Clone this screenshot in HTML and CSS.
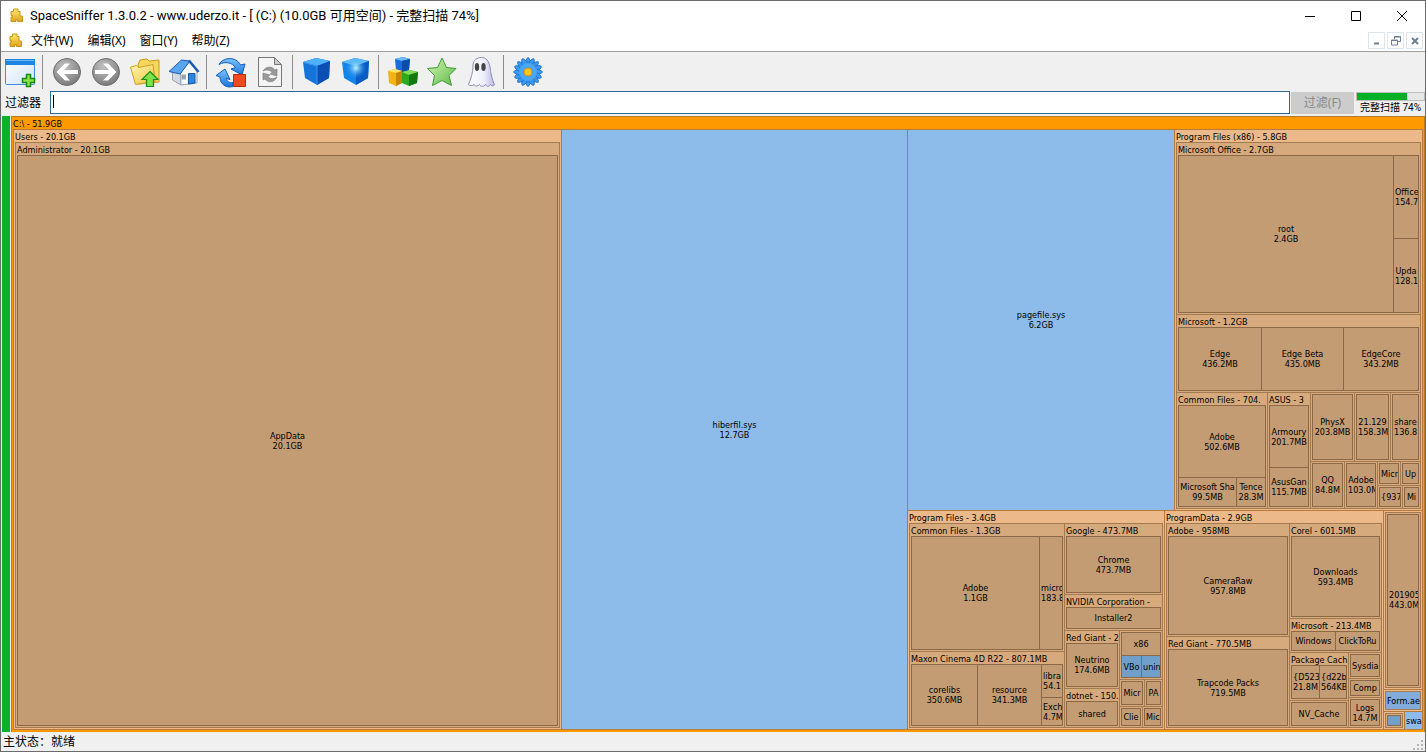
FILE: index.html
```html
<!DOCTYPE html>
<html lang="zh-CN">
<head>
<meta charset="utf-8">
<title>SpaceSniffer 1.3.0.2</title>
<link rel="stylesheet" href="styles.css">
</head>
<body>
<svg class="defs" aria-hidden="true">
  <defs>
    <linearGradient id="gold" x1="0" y1="0" x2="0" y2="1"><stop offset="0" stop-color="#ffe873"/><stop offset="1" stop-color="#dfa516"/></linearGradient>
    <linearGradient id="pane" x1="0" y1="0" x2="1" y2="1"><stop offset="0" stop-color="#ffffff"/><stop offset="1" stop-color="#cfe3fb"/></linearGradient>
    <radialGradient id="steel" cx=".4" cy=".3" r=".7"><stop offset="0" stop-color="#c2c2c2"/><stop offset="1" stop-color="#7c7c7c"/></radialGradient>
    <linearGradient id="arrow" x1="0" y1="0" x2="0" y2="1"><stop offset="0" stop-color="#7cc4ff"/><stop offset="1" stop-color="#1c74dc"/></linearGradient>
    <linearGradient id="folder" x1="0" y1="0" x2="1" y2="1"><stop offset="0" stop-color="#fff7b4"/><stop offset="1" stop-color="#edc13a"/></linearGradient>
    <radialGradient id="glow"><stop offset="0" stop-color="#c4f6ff"/><stop offset="1" stop-color="#2aa2f4" stop-opacity="0"/></radialGradient>
    <linearGradient id="leaf" x1="0" y1="0" x2="1" y2="1"><stop offset="0" stop-color="#d4f5b8"/><stop offset="1" stop-color="#5fba45"/></linearGradient>
    <linearGradient id="ghost" x1="0" y1="0" x2="1" y2="0"><stop offset="0" stop-color="#ffffff"/><stop offset=".6" stop-color="#eeeefc"/><stop offset="1" stop-color="#b9b9e4"/></linearGradient>
    <symbol id="puzzle" viewBox="0 0 16 16"><path d="M4.500 1h4.500v2.500h2v4.500h2.500v5.500h-5v-2h-1.500v2h-5v-4.500h1.500v-1.500h-1.500v-4h2.500z" fill="url(#gold)" stroke="#c8961c" stroke-linejoin="round"/></symbol>
  </defs>
</svg>
<div class="window">
  <header class="titlebar">
    <svg class="app-icon"><use href="#puzzle"/></svg>
    <h1 class="title">SpaceSniffer 1.3.0.2 - www.uderzo.it - [ (C:) (10.0GB 可用空间) - 完整扫描 74%]</h1>
    <div class="window-buttons">
      <button aria-label="最小化"><svg viewBox="0 0 10 10"><path d="M0 5.500h10"/></svg></button>
      <button aria-label="最大化"><svg viewBox="0 0 10 10"><path d="M.5.5h9v9h-9z"/></svg></button>
      <button aria-label="关闭"><svg viewBox="0 0 10 10"><path d="M0 0l10 10M10 0L0 10"/></svg></button>
    </div>
  </header>
  <nav class="menubar">
    <svg class="app-icon"><use href="#puzzle"/></svg>
    <button class="menu">文件(W)</button>
    <button class="menu">编辑(X)</button>
    <button class="menu">窗口(Y)</button>
    <button class="menu">帮助(Z)</button>
    <div class="child-buttons">
      <button aria-label="最小化子窗口"><svg viewBox="0 0 10 10"><path d="M2 7.500h5" stroke-width="2"/></svg></button>
      <button aria-label="还原子窗口"><svg viewBox="0 0 10 10"><path d="M3.500 3V.5h6v5H7M3 1h7M.5 4h6v5h-6zM0 4.500h7"/></svg></button>
      <button aria-label="关闭子窗口"><svg viewBox="0 0 10 10"><path d="M2 2l6 6M8 2L2 8" stroke-width="2"/></svg></button>
    </div>
  </nav>
  <div class="toolbar">
    <button class="tool" aria-label="新建视图"><svg viewBox="0 0 32 32">
      <rect x="1.500" y="3.500" width="29" height="25" rx="1" fill="url(#pane)" stroke="#3c8fdc"/><path d="M1 3h30v6H1z" fill="#1c84e2"/><path d="M2 4.500h28" stroke="#6cb9f5"/>
      <path d="M22.500 18.500h4v4h4v4h-4v4h-4v-4h-4v-4h4z" fill="#8be34a" stroke="#168a16" stroke-width="1.500"/></svg></button>
    <span class="separator"></span>
    <button class="tool" aria-label="后退"><svg viewBox="0 0 32 32"><circle cx="16" cy="16" r="13.500" fill="url(#steel)" stroke="#6e6e6e"/><path d="M27 14v4H13l6 6.500h-5L5.500 16 14 7.500h5L13 14z" fill="#fff"/></svg></button>
    <button class="tool" aria-label="前进"><svg viewBox="0 0 32 32"><circle cx="16" cy="16" r="13.500" fill="url(#steel)" stroke="#6e6e6e"/><path d="M5 14v4h14l-6 6.500h5l8.500-8.500L18 7.500h-5l6 6.500z" fill="#fff"/></svg></button>
    <button class="tool" aria-label="上一级"><svg viewBox="0 0 32 32">
      <path d="M9 9l2-5 7-1 2 2 10-1v22l-20 2z" fill="#f5d75c" stroke="#c99a1a"/><path d="M1.500 11l6-1.500 2 2L24 8.500l2 17-19.500 3z" fill="url(#folder)" stroke="#d0a022"/>
      <path d="M21 15.500l8 8h-4.500v7h-7v-7H13z" fill="#7fe04a" stroke="#1b8f1b" stroke-width="1.200"/></svg></button>
    <button class="tool" aria-label="主页"><svg viewBox="0 0 32 32">
      <path d="M4.500 15l8.500 2v12l-8.500-5z" fill="#d3dae2" stroke="#97a3b0"/><path d="M12.500 17L21 6l8 9.500V27l-16 2z" fill="#f6f9fc" stroke="#97a3b0"/>
      <path d="M1 15.500L13.500 4 22 5 12 18z" fill="#5aa6f0" stroke="#1b5cb0"/><path d="M21 4.500L30.500 16" stroke="#1b5cb0" stroke-width="2.500"/>
      <path d="M20.500 17.500h6.500v9.500l-6.500 1z" fill="#2a86e4" stroke="#17559f"/><path d="M13.500 18.500h4.500v5h-4.500z" fill="#9aa6b4"/></svg></button>
    <span class="separator"></span>
    <button class="tool" aria-label="停止扫描"><svg viewBox="0 0 32 32">
      <path d="M4 8.500C8 1 21 0 25.500 9l4.500-1-3 11-11-6 4.500-1.500C17 6.500 10 5 4 8.500z" fill="url(#arrow)" stroke="#145cb4"/>
      <path d="M1 19.500l9-6.500 5 10.500-4-1c1 3 4 5 7 4v4C11 32.500 5 28 5 21z" fill="url(#arrow)" stroke="#145cb4"/>
      <path d="M18.500 18.500h12v12h-12z" fill="#f14a22" stroke="#c02a10"/></svg></button>
    <button class="tool" aria-label="重新扫描"><svg viewBox="0 0 32 32">
      <path d="M4.500 1.500h16l7 7v22h-23z" fill="#f4f4f4" stroke="#777"/><path d="M20.500 1.500v7h7z" fill="#ccc" stroke="#777"/>
      <path d="M9 15c3-5 9-5 12-1l2-1v7l-7-2 2-1.500c-2-3-6-3-9-1.500zM23 21c-3 6-9 6-12 2l-2 1v-7l7 2-2 1.500c2 3 6 2.500 9 .5z" fill="#9a9a9a" stroke="#777" stroke-width=".6"/></svg></button>
    <span class="separator"></span>
    <button class="tool" aria-label="减少细节"><svg viewBox="0 0 32 32">
      <path d="M2 6l13-4 14 3-1 17-12 7L4 22z" fill="#1474da"/><path d="M2 6l13-4 14 3-13 5z" fill="#4fb0fb"/><path d="M16 10l13-5-1 17-12 7z" fill="#0a4fb4"/><path d="M2.500 6.500L16 10v18" fill="none" stroke="#3a98f0"/></svg></button>
    <button class="tool" aria-label="增加细节"><svg viewBox="0 0 32 32">
      <path d="M2 6l13-4 14 3-1 17-12 7L4 22z" fill="#1484e8"/><path d="M2 6l13-4 14 3-13 5z" fill="#5fbcff"/><path d="M16 10l13-5-1 17-12 7z" fill="#0a5cc4"/><circle cx="16" cy="12" r="10" fill="url(#glow)"/></svg></button>
    <span class="separator"></span>
    <button class="tool" aria-label="文件类型"><svg viewBox="0 0 32 32">
      <path d="M8 3l8-2 7 2-1 11-7 3-6-3z" fill="#1a6cd8"/><path d="M8 3l8-2 7 2-8 2z" fill="#6cb8fa"/><path d="M15 5l8-2-1 11-7 3z" fill="#0c4ba8"/>
      <path d="M1 15l7-2 7 2v12l-6 3-7-3z" fill="#f0b414"/><path d="M1 15l7-2 7 2-6 2z" fill="#ffe468"/><path d="M9 17l6-2v12l-6 3z" fill="#c88408"/>
      <path d="M15 16l8-2 8 2-1 11-8 3-7-3z" fill="#2eaa20"/><path d="M15 16l8-2 8 2-9 3z" fill="#84dc5c"/><path d="M22 19l9-3-1 11-8 3z" fill="#127a10"/></svg></button>
    <button class="tool" aria-label="标记"><svg viewBox="0 0 32 32"><path d="M16 2l4.500 9.500L30 12.500l-7 7 2.500 10L16 24.500l-9.500 5 2-10-7-7 10-1z" fill="url(#leaf)" stroke="#3f9c35" stroke-linejoin="round"/></svg></button>
    <button class="tool" aria-label="可用空间"><svg viewBox="0 0 32 32"><path d="M8 10c0-6 4-8.500 8.500-8.500S24 5 25 11c.6 6 2 12 4.500 18-1.500 1.500-3 1-4-.5-1.500 2.500-4 2.500-5 0-1.500 2.500-5 2.500-6 0-2 2-5 2-5.500 0-1.500 1.500-4 1.500-5.500 0C6 23 8 16 8 10z" fill="url(#ghost)" stroke="#8c8cb4"/><ellipse cx="12" cy="11" rx="2.200" ry="4" fill="#444"/><ellipse cx="18.500" cy="11" rx="2.200" ry="4" fill="#444"/></svg></button>
    <span class="separator"></span>
    <button class="tool" aria-label="设置"><svg viewBox="0 0 32 32">
      <g fill="#3a98ee" stroke="#1260b8" stroke-width=".6">
        <ellipse cx="16" cy="16" rx="3.500" ry="14.500"/><ellipse cx="16" cy="16" rx="3.500" ry="14.500" transform="rotate(22.500 16 16)"/><ellipse cx="16" cy="16" rx="3.500" ry="14.500" transform="rotate(45 16 16)"/><ellipse cx="16" cy="16" rx="3.500" ry="14.500" transform="rotate(67.500 16 16)"/>
        <ellipse cx="16" cy="16" rx="3.500" ry="14.500" transform="rotate(90 16 16)"/><ellipse cx="16" cy="16" rx="3.500" ry="14.500" transform="rotate(112.500 16 16)"/><ellipse cx="16" cy="16" rx="3.500" ry="14.500" transform="rotate(135 16 16)"/><ellipse cx="16" cy="16" rx="3.500" ry="14.500" transform="rotate(157.500 16 16)"/>
      </g><circle cx="16" cy="16" r="9" fill="#4aa6f6"/><circle cx="16" cy="16" r="4" fill="#ffc81e" stroke="#d89010"/></svg></button>
  </div>
  <form class="filterbar">
    <label class="filter-label" for="filter">过滤器</label>
    <input class="filter-input" id="filter" type="text">
    <button class="filter-button" type="button" disabled>过滤(F)</button>
    <div class="scan">
      <progress class="scan-bar" id="scan" max="100" value="74"></progress>
      <label class="scan-label" for="scan">完整扫描 74%</label>
    </div>
  </form>

  <main class="content">
    <div class="free-space"></div>
    <section class="folder root">
      <h2 class="cap">C:\ - 51.9GB</h2>
      <div class="body cols" style="--t:547fr 345fr 514fr">
        <section class="folder l1">
          <h3 class="cap">Users - 20.1GB</h3>
          <div class="body cols">
            <section class="folder l2">
              <h4 class="cap">Administrator - 20.1GB</h4>
              <div class="body cols"><div class="leaf"><p>AppData<br>20.1GB</p></div></div>
            </section>
          </div>
        </section>
        <div class="leaf file0"><p>hiberfil.sys<br>12.7GB</p></div>
        <div class="rows" style="--t:380fr 218fr">
          <div class="cols" style="--t:266fr 247fr">
            <div class="leaf file0"><p>pagefile.sys<br>6.2GB</p></div>
            <section class="folder l1">
              <h3 class="cap">Program Files (x86) - 5.8GB</h3>
              <div class="body rows" style="--t:171fr 77fr 115fr">
                <section class="folder l2">
                  <h4 class="cap">Microsoft Office - 2.7GB</h4>
                  <div class="body cols" style="--t:214fr 24fr">
                    <div class="leaf"><p>root<br>2.4GB</p></div>
                    <div class="rows" style="--t:82fr 73fr">
                      <div class="leaf"><p>Office<br>154.7</p></div>
                      <div class="leaf"><p>Upda<br>128.1</p></div>
                    </div>
                  </div>
                </section>
                <section class="folder l2">
                  <h4 class="cap">Microsoft - 1.2GB</h4>
                  <div class="body cols" style="--t:82fr 81fr 74fr">
                    <div class="leaf"><p>Edge<br>436.2MB</p></div>
                    <div class="leaf"><p>Edge Beta<br>435.0MB</p></div>
                    <div class="leaf"><p>EdgeCore<br>343.2MB</p></div>
                  </div>
                </section>
                <div class="cols" style="--t:90fr 42fr 109fr">
                  <section class="folder l2">
                    <h4 class="cap">Common Files - 704.</h4>
                    <div class="body rows" style="--t:71fr 28fr">
                      <div class="leaf"><p>Adobe<br>502.6MB</p></div>
                      <div class="cols" style="--t:57fr 28fr">
                        <div class="leaf"><p>Microsoft Sha<br>99.5MB</p></div>
                        <div class="leaf"><p>Tence<br>28.3M</p></div>
                      </div>
                    </div>
                  </section>
                  <section class="folder l2">
                    <h4 class="cap">ASUS - 3</h4>
                    <div class="body rows" style="--t:61fr 38fr">
                      <div class="leaf"><p>Armoury<br>201.7MB</p></div>
                      <div class="leaf"><p>AsusGan<br>115.7MB</p></div>
                    </div>
                  </section>
                  <div class="rows" style="--t:68fr 46fr">
                    <div class="cols" style="--t:43fr 35fr 29fr">
                      <div class="pad l2"><div class="body cols"><div class="leaf"><p>PhysX<br>203.8MB</p></div></div></div>
                      <div class="pad l2"><div class="body cols"><div class="leaf"><p>21.129<br>158.3M</p></div></div></div>
                      <div class="pad l2"><div class="body cols"><div class="leaf"><p>share<br>136.8</p></div></div></div>
                    </div>
                    <div class="cols" style="--t:33fr 32fr 42fr">
                      <div class="pad l2"><div class="body cols"><div class="leaf"><p>QQ<br>84.8M</p></div></div></div>
                      <div class="pad l2"><div class="body cols"><div class="leaf"><p>Adobe<br>103.0M</p></div></div></div>
                      <div class="rows" style="--t:23fr 22fr">
                        <div class="cols" style="--t:22fr 19fr">
                          <div class="pad l2"><div class="body cols"><div class="leaf"><p>Micr</p></div></div></div>
                          <div class="pad l2"><div class="body cols"><div class="leaf"><p>Up</p></div></div></div>
                        </div>
                        <div class="cols" style="--t:24fr 17fr">
                          <div class="pad l2"><div class="body cols"><div class="leaf"><p>{937</p></div></div></div>
                          <div class="pad l2"><div class="body cols"><div class="leaf"><p>Mi</p></div></div></div>
                        </div>
                      </div>
                    </div>
                  </div>
                </div>
              </div>
            </section>
          </div>
          <div class="cols" style="--t:256fr 218fr 38fr">
            <section class="folder l1">
              <h3 class="cap">Program Files - 3.4GB</h3>
              <div class="body cols" style="--t:154fr 97fr">
                <div class="rows" style="--t:127fr 75fr">
                  <section class="folder l2">
                    <h4 class="cap">Common Files - 1.3GB</h4>
                    <div class="body cols" style="--t:127fr 22fr">
                      <div class="leaf"><p>Adobe<br>1.1GB</p></div>
                      <div class="leaf"><p>micro<br>183.8</p></div>
                    </div>
                  </section>
                  <section class="folder l2">
                    <h4 class="cap">Maxon Cinema 4D R22 - 807.1MB</h4>
                    <div class="body cols" style="--t:65fr 63fr 20fr">
                      <div class="leaf"><p>corelibs<br>350.6MB</p></div>
                      <div class="leaf"><p>resource<br>341.3MB</p></div>
                      <div class="rows" style="--t:32fr 27fr">
                        <div class="leaf"><p>libra<br>54.1</p></div>
                        <div class="leaf"><p>Exch<br>4.7M</p></div>
                      </div>
                    </div>
                  </section>
                </div>
                <div class="rows" style="--t:70fr 35fr 96fr">
                  <section class="folder l2">
                    <h4 class="cap">Google - 473.7MB</h4>
                    <div class="body cols"><div class="leaf"><p>Chrome<br>473.7MB</p></div></div>
                  </section>
                  <section class="folder l2">
                    <h4 class="cap">NVIDIA Corporation -</h4>
                    <div class="body cols"><div class="leaf"><p>Installer2</p></div></div>
                  </section>
                  <div class="cols" style="--t:54fr 42fr">
                    <div class="rows" style="--t:57fr 38fr">
                      <section class="folder l2">
                        <h4 class="cap">Red Giant - 2</h4>
                        <div class="body cols"><div class="leaf"><p>Neutrino<br>174.6MB</p></div></div>
                      </section>
                      <section class="folder l2">
                        <h4 class="cap">dotnet - 150.</h4>
                        <div class="body cols"><div class="leaf"><p>shared</p></div></div>
                      </section>
                    </div>
                    <div class="rows" style="--t:48fr 26fr 20fr">
                      <div class="pad l2"><div class="body rows" style="--t:22fr 21fr">
                        <div class="leaf"><p>x86</p></div>
                        <div class="cols" style="--t:19fr 18fr">
                          <div class="leaf file2"><p>VBo</p></div>
                          <div class="leaf file2"><p>unin</p></div>
                        </div>
                      </div></div>
                      <div class="cols" style="--t:24fr 17fr">
                        <div class="pad l2"><div class="body cols"><div class="leaf"><p>Micr</p></div></div></div>
                        <div class="pad l2"><div class="body cols"><div class="leaf"><p>PA</p></div></div></div>
                      </div>
                      <div class="cols" style="--t:22fr 19fr">
                        <div class="pad l2"><div class="body cols"><div class="leaf"><p>Clie</p></div></div></div>
                        <div class="pad l2"><div class="body cols"><div class="leaf"><p>Mic</p></div></div></div>
                      </div>
                    </div>
                  </div>
                </div>
              </div>
            </section>
            <section class="folder l1">
              <h3 class="cap">ProgramData - 2.9GB</h3>
              <div class="body cols" style="--t:122fr 91fr">
                <div class="rows" style="--t:112fr 90fr">
                  <section class="folder l2">
                    <h4 class="cap">Adobe - 958MB</h4>
                    <div class="body cols"><div class="leaf"><p>CameraRaw<br>957.8MB</p></div></div>
                  </section>
                  <section class="folder l2">
                    <h4 class="cap">Red Giant - 770.5MB</h4>
                    <div class="body cols"><div class="leaf"><p>Trapcode Packs<br>719.5MB</p></div></div>
                  </section>
                </div>
                <div class="rows" style="--t:94fr 33fr 74fr">
                  <section class="folder l2">
                    <h4 class="cap">Corel - 601.5MB</h4>
                    <div class="body cols"><div class="leaf"><p>Downloads<br>593.4MB</p></div></div>
                  </section>
                  <section class="folder l2">
                    <h4 class="cap">Microsoft - 213.4MB</h4>
                    <div class="body cols" style="--t:43fr 43fr">
                      <div class="leaf"><p>Windows</p></div>
                      <div class="leaf"><p>ClickToRu</p></div>
                    </div>
                  </section>
                  <div class="cols" style="--t:58fr 32fr">
                    <div class="rows" style="--t:47fr 26fr">
                      <section class="folder l2">
                        <h4 class="cap">Package Cach</h4>
                        <div class="body cols" style="--t:27fr 26fr">
                          <div class="leaf"><p>{D523<br>21.8M</p></div>
                          <div class="leaf"><p>{d22b<br>564KB</p></div>
                        </div>
                      </section>
                      <div class="pad l2"><div class="body cols"><div class="leaf"><p>NV_Cache</p></div></div></div>
                    </div>
                    <div class="rows" style="--t:25fr 18fr 29fr">
                      <div class="pad l2"><div class="body cols"><div class="leaf"><p>Sysdia</p></div></div></div>
                      <div class="pad l2"><div class="body cols"><div class="leaf"><p>Comp</p></div></div></div>
                      <div class="pad l2"><div class="body cols"><div class="leaf"><p>Logs<br>14.7M</p></div></div></div>
                    </div>
                  </div>
                </div>
              </div>
            </section>
            <div class="rows" style="--t:178fr 21fr 17fr">
              <div class="pad l1"><div class="body cols"><div class="pad l2"><div class="body cols"><div class="leaf"><p>201905<br>443.0M</p></div></div></div></div></div>
              <div class="pad l1"><div class="body cols"><div class="leaf file1"><p>Form.ae</p></div></div></div>
              <div class="cols" style="--t:20fr 17fr">
                <div class="pad l1"><div class="body cols"><div class="pad l2"><div class="body cols"><div class="leaf file2"></div></div></div></div></div>
                <div class="leaf file0"><p>swa</p></div>
              </div>
            </div>
          </div>
        </div>
      </div>
    </section>
  </main>
  <footer class="statusbar">
    <span>主状态：就绪</span>
    <svg class="grip" viewBox="0 0 11 11"><path d="M8 0h2v2H8zM8 4h2v2H8zM8 8h2v2H8zM4 4h2v2H4zM4 8h2v2H4zM0 8h2v2H0z" fill="#b4b4b4"/></svg>
  </footer>
</div>
</body>
</html>
```
FILE: styles.css
```css
* { box-sizing: border-box; }
body { margin: 0; font: 12px/16px "Noto Sans", "Noto Sans CJK SC", sans-serif; color: #000; }
h1, h2, h3, h4, p { margin: 0; font-weight: 400; font-size: inherit; }
button { padding: 0; border: 0; background: none; font: inherit; color: inherit; }
.defs { position: absolute; width: 0; height: 0; }

.window { display: flex; flex-direction: column; height: 100vh; border: 1px solid #6b6b6b; background: #f0f0f0; }

.titlebar { display: flex; align-items: center; height: 29px; padding-left: 8px; background: #fff; }
.app-icon { flex: none; width: 16px; height: 16px; }
.title { flex: 1; padding-left: 5px; font: 13px/16px Roboto, "Noto Sans CJK SC", sans-serif; white-space: nowrap; }
.window-buttons { display: flex; align-self: stretch; }
.window-buttons button { display: grid; place-items: center; width: 46px; }
.window-buttons svg { width: 10px; height: 10px; fill: none; stroke: #000; }

.menubar { display: flex; align-items: center; height: 22px; padding: 0 2px 0 7px; background: #fff; border-bottom: 1px solid #a0a0a0; }
.menu { padding: 0 7px; white-space: nowrap; }
.child-buttons { display: flex; gap: 2px; margin-left: auto; }
.child-buttons button { display: grid; place-items: center; width: 17px; height: 17px; border: 1px solid #dde5ec; }
.child-buttons svg { width: 10px; height: 10px; fill: none; stroke: #6d7f92; }

.toolbar { display: flex; align-items: center; height: 39px; }
.tool { display: grid; place-items: center; width: 39px; height: 36px; padding-right: 2px; }
.tool svg { width: 32px; height: 32px; }
.separator { width: 1px; height: 34px; margin: 0 5px 0 2px; background: #8c8c8c; }

.filterbar { display: flex; align-items: stretch; height: 25px; padding-bottom: 2px; margin: 0; }
.filter-label { width: 49px; padding-left: 4px; line-height: 23px; }
.filter-input { flex: 1; min-width: 0; border: 1px solid #2a6d94; background: #fff linear-gradient(#000, #000) 2px 3px / 1px 13px no-repeat; padding: 0 2px; font: inherit; outline: 0; }
.filter-button { width: 63px; margin: 1px 2px 0 1px; background: #ccc; color: #8a8a8a; }
.scan { width: 69px; padding-top: 1px; }
.scan-bar { display: block; width: 100%; height: 9px; appearance: none; border: 1px solid #bcbcbc; background: #e6e6e6; }
.scan-bar::-webkit-progress-bar { background: #e6e6e6; }
.scan-bar::-webkit-progress-value { background: #06b025; }
.scan-label { display: block; padding-left: 4px; font: 10px/13px Roboto, "Noto Sans CJK SC", sans-serif; white-space: nowrap; }

.content { flex: 1; display: flex; min-height: 0; padding-left: 1px; }
.free-space { width: 8px; margin-right: 1px; background: #0ab12a; }

/* Treemap: folders nest a caption and a body; 1px gaps show the line colour. */
.folder, .pad { display: grid; grid-template-columns: minmax(0, 1fr); min-width: 0; min-height: 0; padding: 0 1px 1px; overflow: hidden; }
.folder { grid-template-rows: 12px minmax(0, 1fr); }
.root { flex: 1; padding-bottom: 2px; border: solid #b87a24; border-width: 1px 1px 0; background: #f90; }
.pad { grid-template-rows: minmax(0, 1fr); padding-top: 1px; }
.cols, .rows { display: grid; gap: 1px; min-width: 0; min-height: 0; }
.cols { grid-template-columns: var(--t); grid-template-rows: minmax(0, 1fr); }
.rows { grid-template-rows: var(--t); grid-template-columns: minmax(0, 1fr); }
.body { --t: minmax(0, 1fr); padding: 1px; }
.root > .body { background: #b87a3c; }
.l1 { background: #ebb98a; }
.l1 > .body { background: #a47a50; }
.l2 { background: #d7aa7d; }
.l2 > .body { background: #8b6846; }
.cap, .leaf { font: 9px/10px "DejaVu Sans Condensed", "DejaVu Sans", sans-serif; white-space: nowrap; }
.cap { line-height: 14px; }
.leaf { display: grid; grid-template-columns: minmax(0, 1fr); align-items: center; min-width: 0; min-height: 0; padding: 0 1px; overflow: hidden; background: #c49c74; text-align: center; }
.file0 { background: #8dbbea; }
.file1 { background: #80abda; }
.file2 { background: #709fca; }

.statusbar { display: flex; justify-content: space-between; height: 19px; padding: 0 1px 0 2px; line-height: 20px; }
.grip { align-self: flex-end; width: 11px; height: 11px; }
```
